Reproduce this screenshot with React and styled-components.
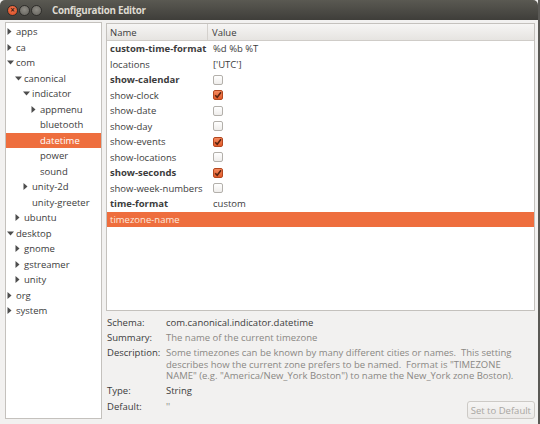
import React from 'react';
import styled, { createGlobalStyle } from 'styled-components';

const Global = createGlobalStyle`
  html, body { margin: 0; padding: 0; background: #f2f1f0; }
  body { font-family: "Open Sans", "DejaVu Sans", sans-serif; }
`

const Window = styled.div`
  width: 540px;
  height: 424px;
  display: flex;
  flex-direction: column;
  background: #f2f1f0;
  box-sizing: border-box;
  border-right: 2px solid #5a5955;
  overflow: hidden;
`

const TitleBar = styled.div`
  height: 20px;
  flex: none;
  display: flex;
  align-items: center;
  padding-left: 7px;
  background: linear-gradient(#5a5952, #3f3e3a);
  border-top-left-radius: 5px;
  border-top-right-radius: 5px;
`

const WinButton = styled.div`
  width: 11px;
  height: 11px;
  border-radius: 50%;
  margin-right: 1px;
  box-sizing: border-box;
  background: ${p => p.close ? 'radial-gradient(circle at 50% 40%, #f47b52, #d5461f)' : 'radial-gradient(circle at 50% 40%, #8e8c85, #64625c)'};
  border: 1px solid #2f2e2b;
  display: flex;
  align-items: center;
  justify-content: center;
  color: #3a1a10;
  font-size: 8px;
  font-weight: bold;
  line-height: 1;
`

const Title = styled.div`
  margin-left: 9px;
  color: #dfdbd2;
  font-weight: bold;
  font-size: 9.8px;
  letter-spacing: -0.3px;
`

const Body = styled.div`
  flex: 1;
  display: flex;
  padding: 2px 3px 5px 5px;
  gap: 4px;
  min-height: 0;
`

const Tree = styled.div`
  width: 97px;
  flex: none;
  background: #fff;
  border: 1px solid #c4c1bd;
  box-sizing: border-box;
  padding-top: 1px;
`

const TreeRow = styled.div`
  height: 15.5px;
  display: flex;
  align-items: center;
  padding-left: ${p => 1 + p.level * 8}px;
  font-size: 9.5px;
  color: ${p => p.sel ? '#fff' : '#3c3c3c'};
  background: ${p => p.sel ? '#ee6e3e' : 'transparent'};
  white-space: nowrap;
`

const Expander = styled.span`
  width: 9px;
  flex: none;
  display: flex;
  align-items: center;
  justify-content: flex-start;
`

const Right = styled.div`
  flex: 1;
  display: flex;
  flex-direction: column;
  min-width: 0;
`

const Table = styled.div`
  height: 288px;
  margin-top: 1px;
  background: #fff;
  border: 1px solid #c4c1bd;
  box-sizing: border-box;
  flex: none;
`

const HeaderRow = styled.div`
  height: 17px;
  display: grid;
  grid-template-columns: 101px 1fr;
  background: linear-gradient(#f6f5f4, #e6e4e1);
  border-bottom: 1px solid #cfccc8;
  box-sizing: border-box;
`

const HeaderCell = styled.div`
  display: flex;
  align-items: center;
  padding-left: ${p => p.first ? 3 : 4}px;
  font-size: 9.5px;
  color: #3c3c3c;
  border-right: ${p => p.first ? '1px solid #d4d1cd' : 'none'};
`

const Row = styled.div`
  height: 15.5px;
  display: grid;
  grid-template-columns: 101px 1fr;
  align-items: center;
  background: ${p => p.sel ? '#ee6e3e' : 'transparent'};
  color: ${p => p.sel ? '#fde9df' : '#3c3c3c'};
  font-size: 9.5px;
`

const Cell = styled.div`
  padding-left: ${p => p.value ? 5 : 3}px;
  font-weight: ${p => p.bold ? 'bold' : 'normal'};
  white-space: nowrap;
  display: flex;
  align-items: center;
`

const Check = styled.span`
  width: 10px;
  height: 10px;
  box-sizing: border-box;
  border-radius: 2px;
  border: 1px solid ${p => p.on ? '#b3471f' : '#b3b0ab'};
  background: ${p => p.on ? 'linear-gradient(#f58a5f, #e25b2a)' : 'linear-gradient(#ffffff, #efedeb)'};
  display: flex;
  align-items: center;
  justify-content: center;
`

const Details = styled.div`
  flex: 1;
  display: grid;
  grid-template-columns: 59px 1fr;
  grid-auto-rows: min-content;
  row-gap: 3.5px;
  padding: 6px 0 0 1px;
  font-size: 9.5px;
  line-height: 11.6px;
  position: relative;
`

const Label = styled.div`
  color: #3c3c3c;
`

const Value = styled.div`
  color: ${p => p.dim ? '#8a8884' : '#3c3c3c'};
  white-space: pre;
`

const DefaultButton = styled.button`
  position: absolute;
  right: 0;
  bottom: 0;
  height: 18px;
  padding: 0 3px;
  font-family: inherit;
  font-size: 9.5px;
  color: #a9a6a2;
  background: linear-gradient(#f6f5f4, #ebe9e7);
  border: 1px solid #cdcac6;
  border-radius: 3px;
`

function Arrow({ open }) {
  return open ? (
    <svg width="7" height="5" viewBox="0 0 7 5"><path d="M0 0.5 L7 0.5 L3.5 4.5 Z" fill="#4d4d4d" /></svg>
  ) : (
    <svg width="5" height="7" viewBox="0 0 5 7"><path d="M0.5 0 L4.5 3.5 L0.5 7 Z" fill="#4d4d4d" /></svg>
  );
}

function Tick() {
  return (
    <svg width="8" height="8" viewBox="0 0 8 8">
      <path d="M1.2 4.2 L3.2 6.2 L7 1.3" stroke="#5a2410" strokeWidth="1.6" fill="none" />
    </svg>
  );
}

const tree = [
  ['apps', 0, 'c'], ['ca', 0, 'c'], ['com', 0, 'o'], ['canonical', 1, 'o'],
  ['indicator', 2, 'o'], ['appmenu', 3, 'c'], ['bluetooth', 3, ''], ['datetime', 3, '', true],
  ['power', 3, ''], ['sound', 3, ''], ['unity-2d', 2, 'c'], ['unity-greeter', 2, ''],
  ['ubuntu', 1, 'c'], ['desktop', 0, 'o'], ['gnome', 1, 'c'], ['gstreamer', 1, 'c'],
  ['unity', 1, 'c'], ['org', 0, 'c'], ['system', 0, 'c'],
];

const keys = [
  ['custom-time-format', true, '%d %b %T'],
  ['locations', false, "['UTC']"],
  ['show-calendar', true, false],
  ['show-clock', false, true],
  ['show-date', false, false],
  ['show-day', false, false],
  ['show-events', false, true],
  ['show-locations', false, false],
  ['show-seconds', true, true],
  ['show-week-numbers', false, false],
  ['time-format', true, 'custom'],
];

export default function App() {
  return (
    <Window>
      <Global />
      <TitleBar>
        <WinButton close>×</WinButton>
        <WinButton />
        <WinButton />
        <Title>Configuration Editor</Title>
      </TitleBar>
      <Body>
        <Tree>
          {tree.map(([name, level, exp, sel]) => (
            <TreeRow key={name + level} level={level} sel={sel}>
              <Expander>{exp && <Arrow open={exp === 'o'} />}</Expander>
              {name}
            </TreeRow>
          ))}
        </Tree>
        <Right>
          <Table>
            <HeaderRow>
              <HeaderCell first>Name</HeaderCell>
              <HeaderCell>Value</HeaderCell>
            </HeaderRow>
            {keys.map(([name, bold, val]) => (
              <Row key={name}>
                <Cell bold={bold}>{name}</Cell>
                <Cell value>
                  {typeof val === 'boolean' ? <Check on={val}>{val && <Tick />}</Check> : val}
                </Cell>
              </Row>
            ))}
            <Row sel>
              <Cell>timezone-name</Cell>
              <Cell value></Cell>
            </Row>
          </Table>
          <Details>
            <Label>Schema:</Label>
            <Value>com.canonical.indicator.datetime</Value>
            <Label>Summary:</Label>
            <Value dim>The name of the current timezone</Value>
            <Label>Description:</Label>
            <Value dim>{'Some timezones can be known by many different cities or names.  This setting\ndescribes how the current zone prefers to be named.  Format is "TIMEZONE\nNAME" (e.g. "America/New_York Boston") to name the New_York zone Boston).'}</Value>
            <Label>Type:</Label>
            <Value>String</Value>
            <Label>Default:</Label>
            <Value dim>''</Value>
            <DefaultButton>Set to Default</DefaultButton>
          </Details>
        </Right>
      </Body>
    </Window>
  );
}
